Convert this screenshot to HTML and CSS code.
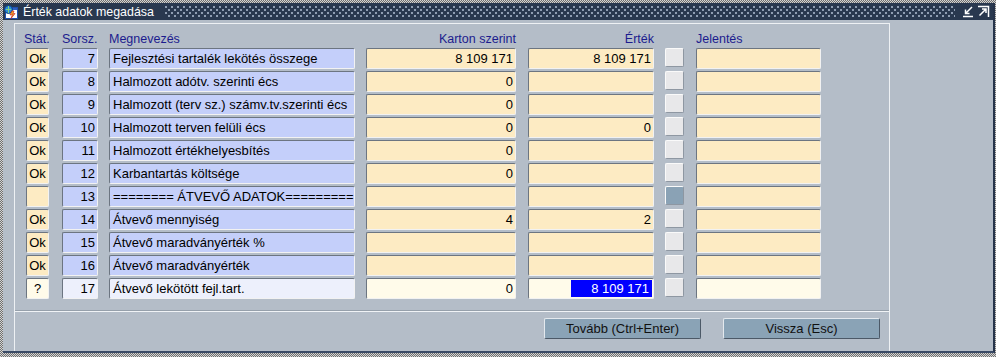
FILE: index.html
```html
<!DOCTYPE html>
<html lang="hu">
<head>
  <meta charset="UTF-8" />
  <title>Érték adatok megadása</title>
  <link rel="stylesheet" href="styles.css">
</head>
<body>
  <div class="window">
    <div class="frame">
      <div class="titlebar">
        <svg class="app-icon" width="14" height="14" viewBox="0 0 14 14">
          <rect x="1.5" y="2.5" width="12" height="11" fill="#fff" stroke="#2050b0"/>
          <rect x="2" y="3" width="11" height="2" fill="#3060c0"/>
          <circle cx="4.5" cy="4.5" r="4" fill="#2a8ad8" stroke="#0c3c80"/>
          <path d="M2 4.5 h5 M4.5 1 v7" stroke="#7fd07f" stroke-width="1"/>
          <path d="M8 6 L6 10 L8.5 9.5 L7 13.5 L11 8.5 L8.8 8.8 L10 6 Z" fill="#f0c020" stroke="#d02020" stroke-width="0.7"/>
        </svg>
        <span class="title">Érték adatok megadása</span>
        <span class="dots"></span>
        <svg class="win-btn" width="13" height="13" viewBox="0 0 13 13">
          <path d="M10 2 L3.5 8.5 M3.5 4.5 V8.5 H7.5 M1 11.5 H11" stroke="#fff" stroke-width="1.5" fill="none"/>
        </svg>
        <svg class="win-btn" width="13" height="13" viewBox="0 0 13 13">
          <path d="M2.5 10.5 L9 4 M5 4 H9 V8 M1 1.5 H11.5 V12" stroke="#fff" stroke-width="1.5" fill="none"/>
        </svg>
      </div>

      <div class="body">
        <div class="panel">
          <div class="grid">
            <div class="head">
              <div class="c-stat h-stat">Stát.</div>
              <div class="c-sorsz">Sorsz.</div>
              <div class="c-name">Megnevezés</div>
              <div class="c-karton right">Karton szerint</div>
              <div class="c-ertek right">Érték</div>
              <div class="c-btn"></div>
              <div class="c-jel">Jelentés</div>
            </div>

            <div class="row">
              <div class="field c-stat yellow center">Ok</div>
              <div class="field c-sorsz blue right">7</div>
              <div class="field c-name blue">Fejlesztési tartalék lekötés összege</div>
              <div class="field c-karton yellow right">8 109 171</div>
              <div class="field c-ertek yellow right">8 109 171</div>
              <div class="c-btn sq"></div>
              <div class="field c-jel yellow"></div>
            </div>
            <div class="row">
              <div class="field c-stat yellow center">Ok</div>
              <div class="field c-sorsz blue right">8</div>
              <div class="field c-name blue">Halmozott adótv. szerinti écs</div>
              <div class="field c-karton yellow right">0</div>
              <div class="field c-ertek yellow right"></div>
              <div class="c-btn sq"></div>
              <div class="field c-jel yellow"></div>
            </div>
            <div class="row">
              <div class="field c-stat yellow center">Ok</div>
              <div class="field c-sorsz blue right">9</div>
              <div class="field c-name blue">Halmozott (terv sz.) számv.tv.szerinti écs</div>
              <div class="field c-karton yellow right">0</div>
              <div class="field c-ertek yellow right"></div>
              <div class="c-btn sq"></div>
              <div class="field c-jel yellow"></div>
            </div>
            <div class="row">
              <div class="field c-stat yellow center">Ok</div>
              <div class="field c-sorsz blue right">10</div>
              <div class="field c-name blue">Halmozott terven felüli écs</div>
              <div class="field c-karton yellow right">0</div>
              <div class="field c-ertek yellow right">0</div>
              <div class="c-btn sq"></div>
              <div class="field c-jel yellow"></div>
            </div>
            <div class="row">
              <div class="field c-stat yellow center">Ok</div>
              <div class="field c-sorsz blue right">11</div>
              <div class="field c-name blue">Halmozott értékhelyesbítés</div>
              <div class="field c-karton yellow right">0</div>
              <div class="field c-ertek yellow right"></div>
              <div class="c-btn sq"></div>
              <div class="field c-jel yellow"></div>
            </div>
            <div class="row">
              <div class="field c-stat yellow center">Ok</div>
              <div class="field c-sorsz blue right">12</div>
              <div class="field c-name blue">Karbantartás költsége</div>
              <div class="field c-karton yellow right">0</div>
              <div class="field c-ertek yellow right"></div>
              <div class="c-btn sq"></div>
              <div class="field c-jel yellow"></div>
            </div>
            <div class="row">
              <div class="field c-stat yellow center"></div>
              <div class="field c-sorsz blue right">13</div>
              <div class="field c-name blue clip">======== ÁTVEVŐ ADATOK=========</div>
              <div class="field c-karton yellow right"></div>
              <div class="field c-ertek yellow right"></div>
              <div class="c-btn sq dark"></div>
              <div class="field c-jel yellow"></div>
            </div>
            <div class="row">
              <div class="field c-stat yellow center">Ok</div>
              <div class="field c-sorsz blue right">14</div>
              <div class="field c-name blue">Átvevő mennyiség</div>
              <div class="field c-karton yellow right">4</div>
              <div class="field c-ertek yellow right">2</div>
              <div class="c-btn sq"></div>
              <div class="field c-jel yellow"></div>
            </div>
            <div class="row">
              <div class="field c-stat yellow center">Ok</div>
              <div class="field c-sorsz blue right">15</div>
              <div class="field c-name blue">Átvevő maradványérték %</div>
              <div class="field c-karton yellow right"></div>
              <div class="field c-ertek yellow right"></div>
              <div class="c-btn sq"></div>
              <div class="field c-jel yellow"></div>
            </div>
            <div class="row">
              <div class="field c-stat yellow center">Ok</div>
              <div class="field c-sorsz blue right">16</div>
              <div class="field c-name blue">Átvevő maradványérték</div>
              <div class="field c-karton yellow right"></div>
              <div class="field c-ertek yellow right"></div>
              <div class="c-btn sq"></div>
              <div class="field c-jel yellow"></div>
            </div>
            <div class="row">
              <div class="field c-stat pale center">?</div>
              <div class="field c-sorsz paleblue right">17</div>
              <div class="field c-name paleblue">Átvevő lekötött fejl.tart.</div>
              <div class="field c-karton pale right">0</div>
              <div class="field c-ertek pale selected"><span class="sel">8 109 171</span></div>
              <div class="c-btn sq"></div>
              <div class="field c-jel pale"></div>
            </div>
          </div>

          <div class="actions">
            <button class="push">Tovább (Ctrl+Enter)</button>
            <button class="push">Vissza (Esc)</button>
          </div>
        </div>
      </div>
    </div>
  </div>
</body>
</html>
```

FILE: styles.css
```css
body {
  margin: 0;
  font-family: "Liberation Sans", Arial, sans-serif;
  font-size: 13px;
}
.window {
  width: 996px;
  height: 357px;
  box-sizing: border-box;
  padding: 3px 1px 4px 3px;
  display: flex;
  background: repeating-conic-gradient(#6f6f6f 0 25%, #d4d4d4 0 50%) 0 0 / 2px 2px;
}
.frame {
  flex: 1;
  display: flex;
  flex-direction: column;
  background: #b4bdc8;
  border-right: 2px solid #26334a;
  border-bottom: 2px solid #3b4b66;
}
.titlebar {
  height: 17px;
  display: flex;
  align-items: center;
  background: #29384f;
  color: #fff;
  padding: 0 3px 0 1px;
}
.app-icon { margin-right: 5px; }
.title {
  font-size: 12.4px;
  white-space: nowrap;
}
.dots {
  flex: 1;
  height: 12px;
  margin: 0 5px 0 11px;
  background:
    radial-gradient(circle at 1px 1px, #8f9db2 0.9px, transparent 1px) 0 0 / 6px 6px,
    radial-gradient(circle at 1px 1px, #8f9db2 0.9px, transparent 1px) 3px 3px / 6px 6px;
}
.win-btn { margin-left: 2px; }

.body {
  flex: 1;
  display: flex;
  padding: 3px 0 0 11px;
}
.panel {
  width: 876px;
  box-sizing: border-box;
  border: 1px solid #eef1f4;
  border-bottom: none;
  display: flex;
  flex-direction: column;
}
.grid {
  padding-left: 11px;
  padding-bottom: 9px;
  border-bottom: 1px solid #96a0ab;
}
.head {
  height: 24px;
  display: flex;
  align-items: flex-end;
  color: #1c1c8e;
  font-size: 12.5px;
  line-height: 14px;
  padding-bottom: 2px;
  box-sizing: border-box;
}
.h-stat { text-indent: -2px; }
.row {
  height: 21px;
  display: flex;
  align-items: flex-start;
  margin-bottom: 2px;
}
.c-stat { width: 23px; flex: none; }
.c-sorsz { width: 36px; margin-left: 13px; flex: none; }
.c-name { width: 246px; margin-left: 11px; flex: none; }
.c-karton { width: 150px; margin-left: 11px; flex: none; }
.c-ertek { width: 126px; margin-left: 12px; flex: none; }
.c-btn { width: 19px; margin-left: 11px; flex: none; }
.c-jel { width: 125px; margin-left: 12px; flex: none; }

.field {
  height: 21px;
  box-sizing: border-box;
  border: 1px solid;
  border-color: #6c7581 #f2f2f2 #f2f2f2 #6c7581;
  border-radius: 2px;
  line-height: 19px;
  padding: 0 2px;
  color: #000;
  white-space: nowrap;
  overflow: hidden;
}
.right { text-align: right; }
.center { text-align: center; padding: 0; }
.yellow { background: #fdebc3; }
.blue { background: #c4cffa; }
.pale { background: #fffbea; }
.paleblue { background: #edf0fc; }
.c-name.field { padding-left: 3px; }
.clip { text-overflow: clip; }

.sq {
  height: 19px;
  box-sizing: border-box;
  background: #e8e8ea;
  border: 1px solid;
  border-color: #fafafa #8e97a2 #8e97a2 #fafafa;
  border-radius: 2px;
}
.sq.dark { background: #8aa2b5; }

.selected {
  display: flex;
  justify-content: flex-end;
  align-items: center;
  padding-right: 1px;
}
.sel {
  width: 81px;
  height: 17px;
  line-height: 17px;
  box-sizing: border-box;
  padding-right: 3px;
  background: #0000ff;
  color: #fff;
  text-align: right;
}

.actions {
  border-top: 1px solid #f0f3f6;
  display: flex;
  justify-content: flex-end;
  gap: 22px;
  padding: 6px 9px 0 0;
}
.push {
  width: 157px;
  height: 21px;
  font-family: "Liberation Sans", Arial, sans-serif;
  font-size: 13px;
  color: #111;
  background: #8aa3b6;
  border: 1px solid;
  border-color: #e4e9ee #4c5967 #4c5967 #e4e9ee;
  border-radius: 2px;
  padding: 0;
}
```
